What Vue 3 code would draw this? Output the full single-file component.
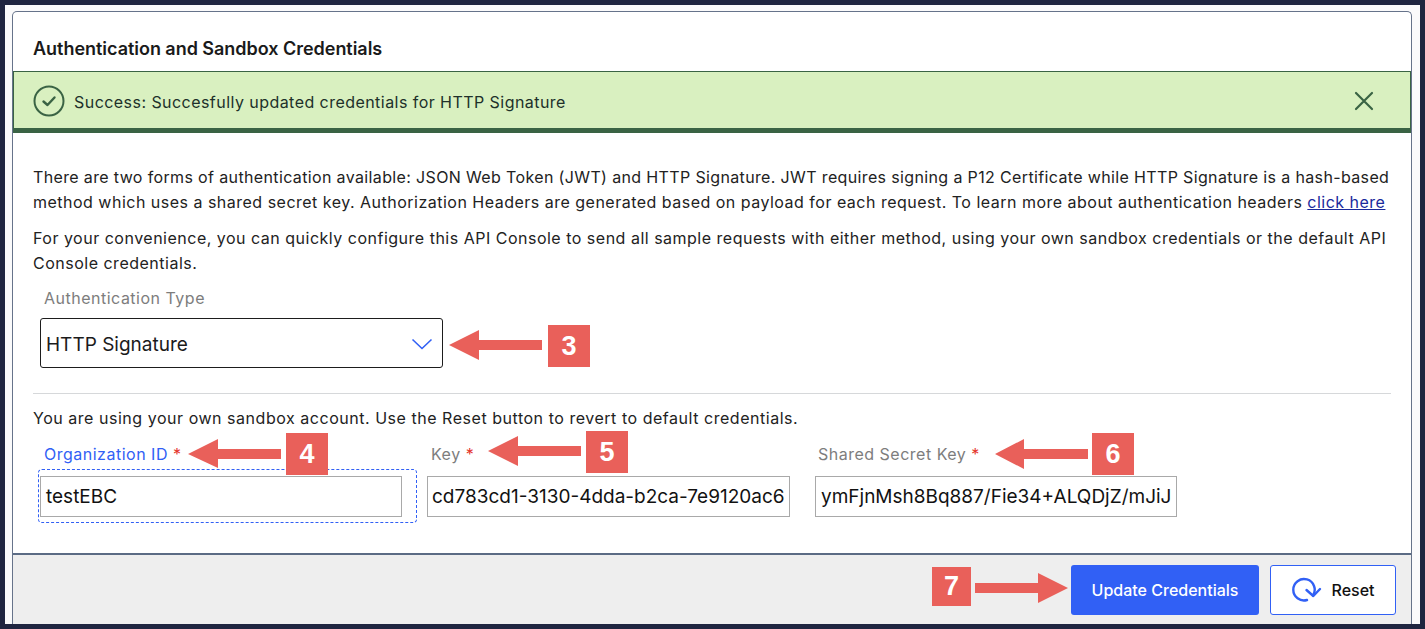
<script setup>
const marks = [
  { n: 3, cls: 'm3' }, { n: 4, cls: 'm4' }, { n: 5, cls: 'm5' }, { n: 6, cls: 'm6' }, { n: 7, cls: 'm7' }
]
const arrows = [
  '449,345 479,330 479,340 542,340 542,350 479,350 479,360',
  '188,454 218,439 218,449 281,449 281,459 218,459 218,468',
  '488,451 518,436 518,446 581,446 581,456 518,456 518,466',
  '995,454 1024,439 1024,449 1088,449 1088,459 1024,459 1024,469',
  '1068,588 1038,573 1038,583 975,583 975,593 1038,593 1038,603'
]
</script>

<template>
  <div class="frame">
    <div class="sheet">
      <section class="card">
        <header class="head"><h2>Authentication and Sandbox Credentials</h2></header>
        <div class="alert">
          <svg class="ok" width="32" height="32" viewBox="0 0 32 32" fill="none" stroke="#3a6344">
            <circle cx="16" cy="16" r="14.5" stroke-width="2" />
            <path d="M10.5 16.5l4 3.5 7-7.5" stroke-width="2.4" stroke-linecap="round" stroke-linejoin="round" />
          </svg>
          <span class="alert-text">Success: Succesfully updated credentials for HTTP Signature</span>
          <svg class="close" width="20" height="20" viewBox="0 0 20 20" fill="none" stroke="#3a6344" stroke-width="2.2" stroke-linecap="round">
            <path d="M2 2l16 16M18 2L2 18" />
          </svg>
        </div>
        <div class="body">
          <p class="p1">There are two forms of authentication available: JSON Web Token (JWT) and HTTP Signature. JWT requires signing a P12 Certificate while HTTP Signature is a hash-based <span class="wide">method which uses a shared secret key. Authorization Headers are generated based on payload for each request. To learn more about authentication headers <a href="#">click here</a></span></p>
          <p class="p2">For your convenience, you can quickly configure this API Console to send all sample requests with either method, using your own sandbox credentials or the default API Console credentials.</p>
          <div class="type-label">Authentication Type</div>
          <div class="select">
            <span>HTTP Signature</span>
            <svg width="22" height="12" viewBox="0 0 22 12" fill="none" stroke="#3160f5" stroke-width="1.6"><path d="M1.5 1.5L11 10.5 20.5 1.5" /></svg>
          </div>
          <hr class="rule" />
          <p class="p3">You are using your own sandbox account. Use the Reset button to revert to default credentials.</p>
          <div class="fields">
            <div class="field f1">
              <label class="active">Organization ID <b>*</b></label>
              <div class="focus"><div class="input">testEBC</div></div>
            </div>
            <div class="field f2">
              <label>Key <b>*</b></label>
              <div class="input">cd783cd1-3130-4dda-b2ca-7e9120ac6</div>
            </div>
            <div class="field f3">
              <label>Shared Secret Key <b>*</b></label>
              <div class="input">ymFjnMsh8Bq887/Fie34+ALQDjZ/mJiJ</div>
            </div>
          </div>
        </div>
        <footer class="foot">
          <button class="primary">Update Credentials</button>
          <button class="ghost">
            <svg width="32" height="26" viewBox="0 0 32 26" fill="none" stroke="#3160f5" stroke-width="2.4">
              <path d="M16 23A10.7 10.7 0 1 1 22 18.5" stroke-linecap="round" />
              <path d="M15.5 13l6.8 6 6.7-7" stroke-linecap="round" stroke-linejoin="round" />
            </svg>
            <span>Reset</span>
          </button>
        </footer>
      </section>
    </div>
    <svg class="arrows" width="1425" height="629" viewBox="0 0 1425 629">
      <polygon v-for="a in arrows" :key="a" :points="a" fill="#e9605a" />
    </svg>
    <div v-for="m in marks" :key="m.n" class="mark" :class="m.cls">{{ m.n }}</div>
  </div>
</template>

<style>
html, body { margin: 0; background: #1f2540; }
</style>

<style scoped>
.frame {
  position: relative;
  box-sizing: border-box;
  width: 1425px;
  height: 629px;
  padding: 5px;
  background: #1f2540;
  font-family: Inter, "Liberation Sans", sans-serif;
  color: #1c1c1c;
  overflow: hidden;
}
.sheet {
  box-sizing: border-box;
  height: 619px;
  padding: 6px 8px 0 7px;
  background: #fafafb;
}
.card {
  box-sizing: border-box;
  height: 613px;
  background: #fff;
  border: 1px solid #66738a;
  border-bottom: 0;
  border-radius: 5px 5px 0 0;
  display: flex;
  flex-direction: column;
}
.head { height: 59px; padding-left: 20px; display: flex; align-items: center; flex: none; }
.head h2 { margin: 14px 0 0; font-size: 18px; font-weight: 600; letter-spacing: -0.03px; color: #1a1a1a; }
.alert {
  flex: none;
  box-sizing: border-box;
  height: 62px;
  background: #d9f0c0;
  border: 1px solid #3a6344;
  border-bottom-width: 5px;
  display: flex;
  align-items: center;
  padding: 1px 36px 0 19px;
}
.ok { flex: none; margin-right: 9px; }
.alert-text { flex: 1; font-size: 16px; letter-spacing: 0.45px; color: #20302a; padding-top: 3px; }
.close { flex: none; }
.body { flex: 1; min-height: 0; padding: 32px 20px 0 20px; }
p { margin: 0; font-size: 16px; line-height: 25px; letter-spacing: 0.5px; color: #222; }
.p1 { letter-spacing: 0.36px; }
.wide { letter-spacing: 0.49px; }
.p2 { margin-top: 11px; }
a { color: #1a2a9c; }
.type-label { margin: 10px 0 0 11px; font-size: 16px; line-height: 24px; letter-spacing: 0.5px; color: #7d7d7d; }
.select {
  box-sizing: border-box;
  width: 403px;
  height: 50px;
  margin: 8px 0 0 7px;
  border: 1px solid #1d1d1d;
  border-radius: 3px;
  display: flex;
  align-items: center;
  justify-content: space-between;
  padding: 2px 9px 0 5px;
  font-size: 19px;
  color: #1b1b1b;
}
.rule { margin: 25px 0 0; border: 0; border-top: 1px solid #d6d8da; }
.p3 { margin-top: 12px; letter-spacing: 0.53px; }
.fields { display: flex; margin-top: 11px; }
label { display: block; font-size: 16px; line-height: 24px; letter-spacing: 0.5px; color: #7d7d7d; padding-left: 6px; margin-bottom: 3px; }
label b { color: #e4332a; font-weight: 400; }
label.active { color: #3160f5; }
.field { flex: none; }
.f1 { width: 384px; margin-left: 5px; }
.f2 { width: 363px; margin-left: 5px; }
.f3 { width: 362px; margin-left: 25px; }
.f2 label { padding-left: 4px; }
.f3 label { padding-left: 3px; }
.focus {
  box-sizing: border-box;
  width: 379px;
  height: 54px;
  padding: 6px 14px 5px 1px;
  border: 1px dashed #3160f5;
  border-radius: 4px;
}
.input {
  box-sizing: border-box;
  height: 41px;
  border: 1px solid #a9a9a9;
  padding: 0 4px;
  display: flex;
  align-items: center;
  font-size: 19px;
  color: #111;
  white-space: nowrap;
  overflow: hidden;
  background: #fff;
}
.f1 .input, .f3 .input { padding-left: 5px; }
.f2 .input, .f3 .input { margin-top: 10px; }
.foot {
  flex: none;
  box-sizing: border-box;
  height: 71px;
  background: #eeeeee;
  border-top: 2px solid #5b6b84;
  display: flex;
  justify-content: flex-end;
  align-items: flex-start;
  gap: 11px;
  padding: 10px 15px 0 0;
}
button {
  box-sizing: border-box;
  height: 50px;
  border-radius: 3px;
  font-family: inherit;
  font-size: 16px;
  font-weight: 500;
  display: flex;
  align-items: center;
  justify-content: center;
  padding: 0;
}
.primary { width: 188px; background: #3160f5; border: 0; color: #fff; }
.ghost { width: 126px; background: #fff; border: 1px solid #3160f5; color: #111; gap: 8px; }
.arrows { position: absolute; left: 0; top: 0; pointer-events: none; }
.mark {
  position: absolute;
  width: 42px;
  height: 42px;
  background: #e9605a;
  color: #fff;
  font: 700 27px/42px "Liberation Sans", Arial, sans-serif;
  text-align: center;
}
.m3 { left: 548px; top: 325px; }
.m4 { left: 286px; top: 433px; }
.m5 { left: 586px; top: 431px; }
.m6 { left: 1092px; top: 433px; }
.m7 { left: 932px; top: 567px; width: 39px; height: 39px; line-height: 39px; }
</style>
